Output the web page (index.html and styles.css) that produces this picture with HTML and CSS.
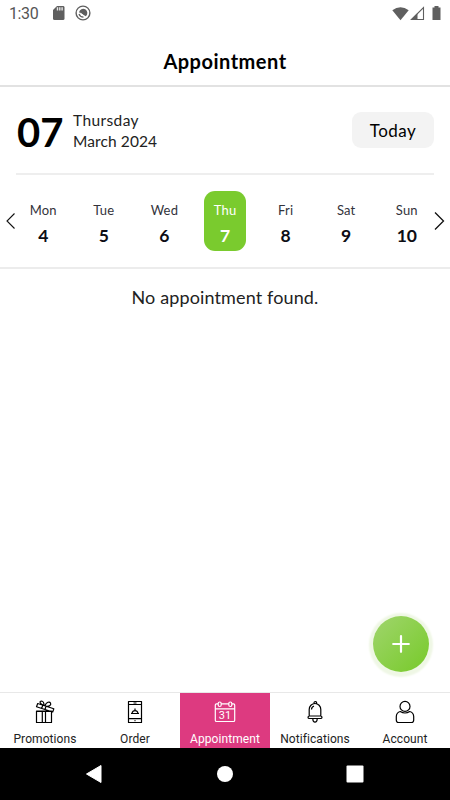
FILE: index.html
```html
<!DOCTYPE html>
<html lang="en">
<head>
<meta charset="utf-8">
<title>Appointment</title>
<link rel="stylesheet" href="styles.css">
</head>
<body>
<div class="app">
  <div class="status">
    <span class="clock">1:30</span>
    <svg class="sd" width="12" height="14" viewBox="0 0 12 14"><path d="M4 0H10.500Q11.500 0 11.500 1.500V12.500Q11.500 14 10 14H1.500Q0 14 0 12.500V4Z" fill="#5f5f5f"/><path d="M4.500 1.200V4.500M6.800 1.200V4.500M9.100 1.200V4.500" stroke="#e8e8e8" stroke-width="1.400"/></svg>
    <svg class="debug" width="16" height="16" viewBox="0 0 16 16"><circle cx="8" cy="8" r="6.900" fill="none" stroke="#5f5f5f" stroke-width="1.400"/><path d="M4 7.200A4.200 4.200 0 1 1 10.800 11.200Z" fill="#5f5f5f"/><path d="M5.600 8.200L9.300 11.300" stroke="#fff" stroke-width="1"/><path d="M4 9Q5 12 8.500 12.200" fill="none" stroke="#5f5f5f" stroke-width="1.200"/></svg>
    <svg class="signals" width="50" height="16" viewBox="0 0 50 16"><path d="M0.300 4.200Q8.500-1.800 16.700 4.200L8.500 14.300Z" fill="#5f5f5f"/><path d="M31.500 1.500V13.500H19.500Z" fill="none" stroke="#5f5f5f" stroke-width="1.100"/><path d="M18.500 14L25.500 7V14Z" fill="#5f5f5f"/><path d="M40.500 1.500H42.500V0H46.500V1.500H48.500V14H40.500Z" fill="#5f5f5f"/></svg>
  </div>
  <header class="title"><span>Appointment</span></header>
  <section class="date">
    <span class="day-number">07</span>
    <div class="date-text"><span class="weekday">Thursday</span><span class="month">March 2024</span></div>
    <button class="today"><span>Today</span></button>
  </section>
  <section class="week">
    <svg class="arrow" width="10" height="18" viewBox="0 0 10 18"><path d="M9.500 1.500L2 9L9.500 16.500" fill="none" stroke="#111" stroke-width="1.100"/></svg>
    <div class="days">
      <div class="day"><span>Mon</span><b>4</b></div>
      <div class="day"><span>Tue</span><b>5</b></div>
      <div class="day"><span>Wed</span><b>6</b></div>
      <div class="day selected"><span>Thu</span><b>7</b></div>
      <div class="day"><span>Fri</span><b>8</b></div>
      <div class="day"><span>Sat</span><b>9</b></div>
      <div class="day"><span>Sun</span><b>10</b></div>
    </div>
    <svg class="arrow next" width="11" height="20" viewBox="0 0 11 20"><path d="M1 1.500L9.500 10L1 18.500" fill="none" stroke="#111" stroke-width="1.300"/></svg>
  </section>
  <main class="content">
    <p class="empty">No appointment found.</p>
    <button class="fab" aria-label="Add"><svg width="18" height="18" viewBox="0 0 18 18"><path d="M9 1.200V16.800M1.200 9H16.800" stroke="#fff" stroke-width="2.200" stroke-linecap="round"/></svg></button>
  </main>
  <nav class="tabs">
    <a class="tab promotions"><svg width="24" height="24" viewBox="0 0 24 24"><path d="M3.500 11V22.500H18.500V11ZM3.500 11.500H18.500M9.300 12V22M12.500 12V22M3.500 6.700L4.700 3.500L20.800 8.800L19.700 12ZM9.800 5.200L8.700 8.300M13 6.300L12 9.500M10.500 5.200C6 3.500 6.500 1 8.500 1C10.500 1.300 11 3.500 11 5.200ZM12 5.600C13.500 2 16.500 1.300 17.500 3C18.500 5 16.500 6.700 13 6.300Z"/></svg><span>Promotions</span></a>
    <a class="tab order"><svg width="24" height="24" viewBox="0 0 24 24"><path d="M5.500 1.500H18.500V22.500H5.500ZM5.500 4.500H18.500M5.500 18.700H18.500M10.500 3H13.500M11.500 20.600H12.500M8 13.500H16M9 13A3.100 3.300 0 0 1 15 13M12 8.500V10"/></svg><span>Order</span></a>
    <a class="tab appointment"><svg width="24" height="24" viewBox="0 0 24 24"><path d="M5 3.800H3.500Q2.300 3.800 2.300 5V20.200Q2.300 21.500 3.500 21.500H20.500Q21.700 21.500 21.700 20.200V5Q21.700 3.800 20.500 3.800H19M8.200 3.800H15.800M2.300 8.800H21.700"/><rect x="5.200" y="2" width="3" height="4.500" rx="1.500"/><rect x="15.800" y="2" width="3" height="4.500" rx="1.500"/><text class="calendar-number" x="12" y="19.300" text-anchor="middle">31</text></svg><span>Appointment</span></a>
    <a class="tab notifications"><svg width="24" height="24" viewBox="0 0 24 24"><path d="M6.200 16V9.500A5.800 6 0 0 1 17.800 9.500V16M6.500 16H17.500Q19 16 19 17.200Q19 18.500 17.500 18.500H6.500Q5 18.500 5 17.200Q5 16 6.500 16M9.800 19Q10 22.200 12 22.200Q14 22.200 14.200 19M11 3.500Q10.800 1.500 12.500 1.500Q14 1.700 13.500 3.800M8.500 9.500Q8.500 7 11 6"/></svg><span>Notifications</span></a>
    <a class="tab account"><svg width="24" height="24" viewBox="0 0 24 24"><circle cx="12" cy="6.400" r="5"/><path d="M7.300 11.500Q3.500 12.500 3.300 16.500V20Q3.300 22.500 5.500 22.500H18.500Q20.700 22.500 20.700 20V16.500Q20.500 12.500 16.700 11.500Q12 14.500 7.300 11.500Z"/></svg><span>Account</span></a>
  </nav>
  <div class="system">
    <svg width="18" height="20" viewBox="0 0 18 20"><path d="M16 1.500V18.500L1.500 10Z" fill="#fff" stroke="#fff" stroke-linejoin="round"/></svg>
    <svg width="18" height="18" viewBox="0 0 18 18"><circle cx="9" cy="9" r="8" fill="#fff"/></svg>
    <svg width="18" height="18" viewBox="0 0 18 18"><rect x=".5" y=".5" width="17" height="17" rx="1" fill="#fff"/></svg>
  </div>
</div>
</body>
</html>
```
FILE: styles.css
```css
* { box-sizing: border-box; }
body { margin: 0; background: #fff; color: #000; font-family: Lato, "Liberation Sans", sans-serif; }
button { border: 0; padding: 0; color: inherit; font-family: inherit; }
svg { display: block; flex: none; }
.app { width: 450px; height: 800px; display: flex; flex-direction: column; overflow: hidden; }

.status { height: 38px; display: flex; align-items: flex-start; padding: 6px 8px 0 9px; }
.clock { width: 44px; font: 400 16px/16px Roboto, sans-serif; color: #555; letter-spacing: -.4px; }
.debug { margin: -1px 0 0 10px; }
.signals { margin: 0 0 0 auto; }

.title { height: 49px; border-bottom: 2px solid #e2e2e2; text-align: center; font-size: 20px; font-weight: 700; line-height: 47px; letter-spacing: .5px; }

.date { height: 88px; margin: 0 16px; display: flex; align-items: flex-start; border-bottom: 2px solid #eee; }
.day-number { width: 57px; padding-left: 1px; margin-top: 21px; font-size: 40px; line-height: 48px; font-weight: 700; }
.date-text { display: flex; flex-direction: column; margin-top: 23px; font-size: 15.500px; line-height: 21px; color: #222; }
.weekday { letter-spacing: .4px; }
.month { letter-spacing: .1px; }
.today { width: 82px; height: 36px; margin: 25px 0 0 auto; border-radius: 9px; background: #f3f3f3; font-size: 17px; line-height: 38px; letter-spacing: .5px; }

.week { height: 94px; display: flex; align-items: center; border-bottom: 2px solid #ececec; padding: 0 5px; }
.days { flex: 1; display: grid; grid-template-columns: repeat(7, 60.600px); justify-content: center; justify-items: center; margin: 0 -4px 0 -3px; }
.day { width: 42px; height: 60px; display: flex; flex-direction: column; align-items: center; border-radius: 11px; padding-top: 9px; color: #33333b; }
.day span { font-size: 13px; line-height: 20px; letter-spacing: .2px; }
.day b { font-size: 17.500px; line-height: 24px; margin-top: 4px; color: #0d0d14; }
.selected, .selected b { color: #fff; }
.selected { background: #7acb2e; }

.content { flex: 1; position: relative; }
.empty { margin: 16px 0 0; text-align: center; font-size: 18px; line-height: 24px; letter-spacing: .13px; color: #222; }
.fab { position: absolute; right: 21px; bottom: 20px; width: 56px; height: 56px; display: grid; place-items: center; border-radius: 50%; background: linear-gradient(135deg, #a0d56d, #77ca29); box-shadow: 0 1px 2px 4px #eff7e5; }

.tabs { height: 56px; display: grid; grid-template-columns: repeat(5, 1fr); border-top: 1px solid #e8e8e8; }
.tab { display: flex; flex-direction: column; align-items: center; padding-top: 7px; font: 400 12px/16px Roboto, sans-serif; letter-spacing: .08px; color: #222; }
.tab svg { fill: none; stroke: #000; stroke-width: 1.200; stroke-linejoin: round; }
.tab span { margin-top: 7px; }
.tab.appointment { background: #dd3a80; color: #fff; }
.tab.appointment svg { stroke: #fff; }
.calendar-number { font: 400 11px Roboto, sans-serif; fill: #fff; stroke: none; letter-spacing: 0; }
.system { height: 52px; background: #000; display: flex; align-items: center; justify-content: space-between; padding: 0 86px 0 85px; }
```
